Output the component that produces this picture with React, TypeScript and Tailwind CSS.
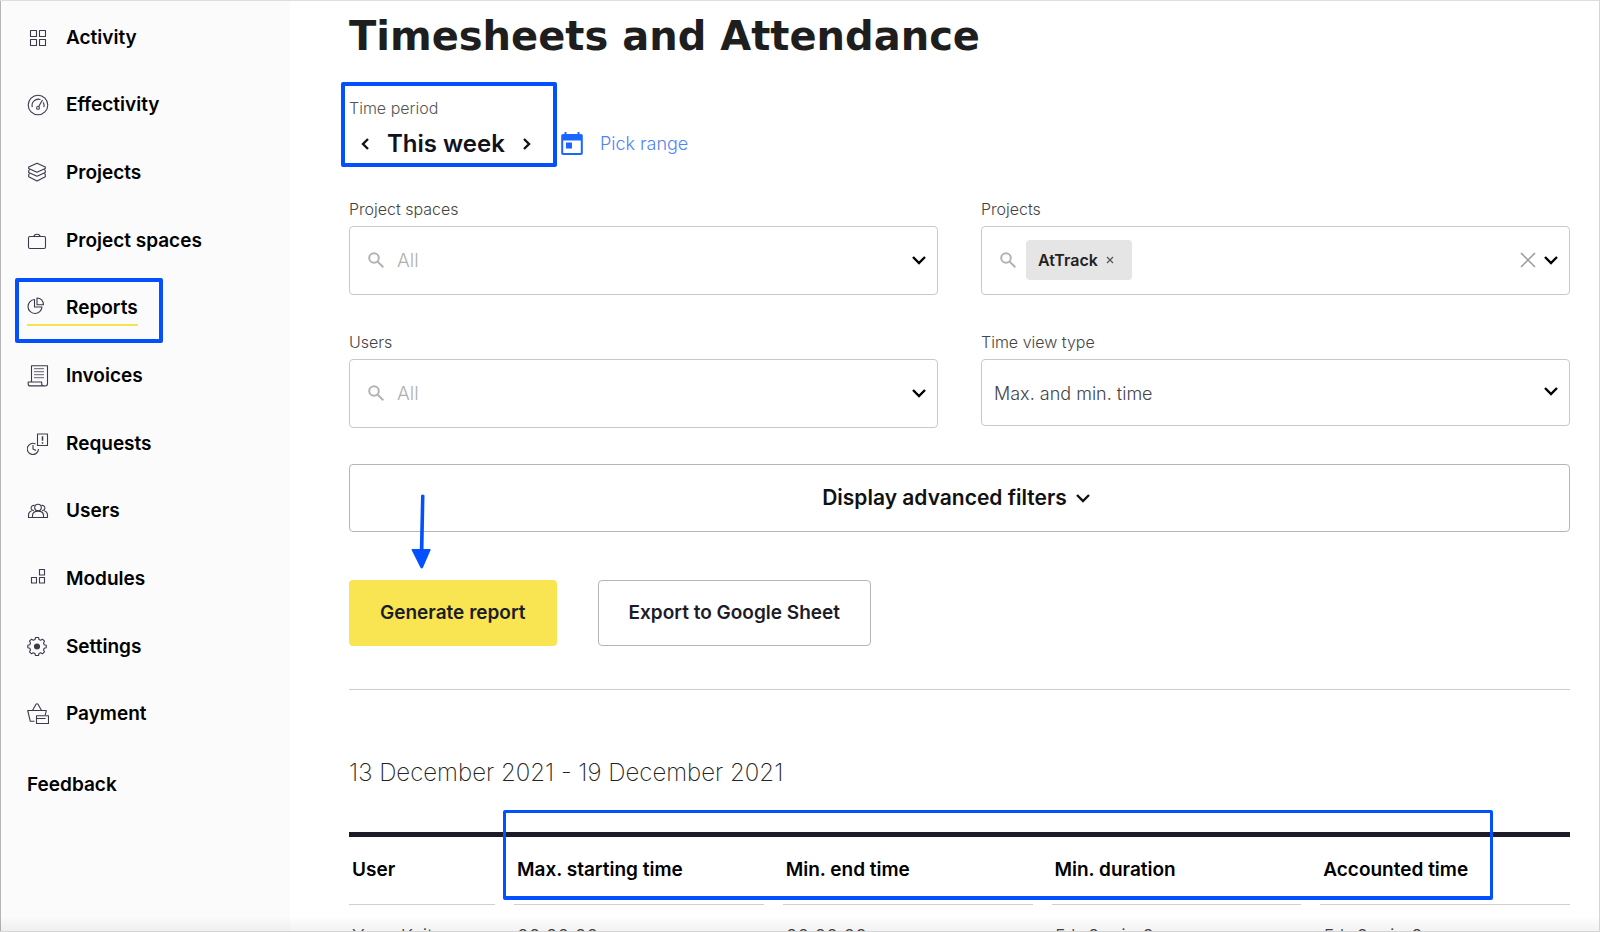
import React from 'react';

const icons: Record<string, React.ReactNode> = {
  Activity: (
    <>
      <rect x="3.5" y="3.5" width="6" height="6" />
      <rect x="12.5" y="3.5" width="6" height="6" />
      <rect x="3.5" y="12.5" width="6" height="6" />
      <rect x="12.5" y="12.5" width="6" height="6" />
    </>
  ),
  Effectivity: (
    <>
      <circle cx="11" cy="11" r="9.8" />
      <path d="M5.3 13.2a6.3 6.3 0 0 1 8.2-7.6M16.2 8.2a6.3 6.3 0 0 1 .6 5" />
      <path d="M11.6 12.6 15.5 6" />
      <circle cx="11" cy="13.9" r="1.4" />
    </>
  ),
  Projects: (
    <>
      <path d="M10 1.2 18.3 5v1.6L10 10.2 1.7 6.6V5z" />
      <path d="M2.6 7.2 1.7 8.8v1.8l8.3 3.6 8.3-3.6V8.8l-.9-1.6" />
      <path d="m2.6 11.2-.9 1.6v1.9L10 19l8.3-4.3v-1.9l-.9-1.6" />
    </>
  ),
  'Project spaces': (
    <>
      <rect x="1.5" y="6.5" width="17" height="12" rx="1.5" />
      <path d="M7 6.5c0-1.7.8-2.2 3-2.2s3 .5 3 2.2" />
    </>
  ),
  Reports: (
    <>
      <path d="M7.5 2.5a7 7 0 1 0 7.5 7.5H7.5z" />
      <path d="M10 1v6.8h6.5C16.5 3.8 13.7 1 10 1z" />
    </>
  ),
  Invoices: (
    <>
      <path d="M4.5 17V.7h16v18.1a2 2 0 0 1-2 2" />
      <path d="M18.5 20.9H3.2a2 2 0 0 1-2-2V17h13.5v1.8c0 1.3.8 2.1 2 2.1" />
      <path d="M7 3.7h10M7 6.7h10M7 9.7h10M7 12.7h10" strokeWidth="0.8" />
    </>
  ),
  Requests: (
    <>
      <path d="M8.5 10.9a5.6 5.6 0 1 0 3 5.2" />
      <path d="M6 12v4l3 1.6" />
      <path d="M10.5 1h10v11.5h-10z" />
      <path d="M15.5 3.3v4.5M15.5 9.3v1.5" strokeWidth="1.5" />
    </>
  ),
  Users: (
    <>
      <circle cx="11" cy="7.5" r="3.3" />
      <path d="M7.7 5.6a2.6 2.6 0 1 0-.9 5M14.3 5.6a2.6 2.6 0 1 1 .9 5" />
      <path d="M5.5 17.5v-2c0-2.7 2.3-4.4 5.5-4.4s5.5 1.7 5.5 4.4v2z" />
      <path d="M4.8 10.8c-2.2.6-3.3 2.2-3.3 4.7v2h4M17.2 10.8c2.2.6 3.3 2.2 3.3 4.7v2h-4" />
    </>
  ),
  Modules: (
    <>
      <rect x="12.5" y="1.5" width="5" height="5.5" />
      <rect x="4.5" y="9.5" width="5" height="5.5" />
      <rect x="12.5" y="9.5" width="5" height="5.5" />
    </>
  ),
  Settings: (
    <>
      <path d="M8.5 1.5h3l.5 2 1.7.7 1.8-1 2 2-1 1.8.7 1.7 2 .5v2.6l-2 .5-.7 1.7 1 1.8-2 2-1.8-1-1.7.7-.5 2h-3l-.5-2-1.7-.7-1.8 1-2-2 1-1.8-.7-1.7-2-.5V9.2l2-.5.7-1.7-1-1.8 2-2 1.8 1 1.7-.7z" />
      <circle cx="10" cy="10.5" r="2.5" fill="currentColor" />
    </>
  ),
  Payment: (
    <>
      <path d="M7.5 18.3H3.3L.7 7.5h18.6l-1 4.5" />
      <path d="M5.5 7.5 9 1.3c.5-.8 1.5-.8 2 0l3.5 6.2" />
      <path d="M9.5 12.7h12v7.8h-12zM9.5 15.5h9" />
    </>
  ),
};

const menu = [
  'Activity',
  'Effectivity',
  'Projects',
  'Project spaces',
  'Reports',
  'Invoices',
  'Requests',
  'Users',
  'Modules',
  'Settings',
  'Payment',
];

const columns = ['User', 'Max. starting time', 'Min. end time', 'Min. duration', 'Accounted time'];

const rows = [['Yana Kvit', '00:00:00', '00:00:00', '5 h 0 min 0 s', '5 h 0 min 0 s']];

const Chevron: React.FC<{ className?: string; d?: string }> = ({ className = '', d = 'm2 5 6 6 6-6' }) => (
  <svg className={`h-4 w-4 shrink-0 ${className}`} viewBox="0 0 16 16" fill="none" stroke="currentColor" strokeWidth="2.4">
    <path d={d} />
  </svg>
);

const SearchIcon: React.FC = () => (
  <svg className="h-4 w-4 shrink-0 text-[#b3b3b3]" viewBox="0 0 16 16" fill="none" stroke="currentColor" strokeWidth="2">
    <circle cx="6" cy="6" r="4.8" />
    <path d="m9.5 9.5 5.8 5.8" />
  </svg>
);

// Blue frame drawn over the part of the page it points out
const Highlight: React.FC<{ className: string }> = ({ className }) => (
  <div className={`pointer-events-none absolute rounded-xs border-[#0450ff] ${className}`} />
);

const Sidebar: React.FC = () => (
  <aside className="w-[290px] shrink-0 border-l border-[#b5b5b5] bg-[#fbfbfb] pl-[26px] pt-1 text-[19px] font-semibold leading-6">
    <nav className="flex h-[744px] flex-col">
      {menu.map((name) => (
        <div key={name} className="flex flex-1 items-center">
          <a href="#" className="relative flex items-center gap-[17px]">
            <svg
              className="h-[22px] w-[22px] shrink-0 text-[#3a3a4a]"
              viewBox="0 0 22 22"
              fill="none"
              stroke="currentColor"
              strokeWidth="1.1"
              strokeLinejoin="round"
            >
              {icons[name]}
            </svg>
            <span>{name}</span>
            {name === 'Reports' && (
              <>
                <span className="absolute inset-x-0 -bottom-[6px] h-[2px] bg-[#f8e34f]" />
                <Highlight className="-bottom-[23px] -left-3 -right-[25px] -top-[18px] border-4" />
              </>
            )}
          </a>
        </div>
      ))}
    </nav>
    <a href="#" className="mt-[25px] inline-block">
      Feedback
    </a>
  </aside>
);

const SearchSelect: React.FC<{ id: string; label: string; chip?: string }> = ({ id, label, chip }) => (
  <div>
    <label htmlFor={id} className="mb-[7px] block text-base font-light leading-5 text-[#444]">
      {label}
    </label>
    <div className="flex h-[69px] items-center rounded-sm border border-[#c9c9c9] pb-px pl-[18px] pr-[10px]">
      <SearchIcon />
      {chip && (
        <span className="ml-[10px] flex h-10 items-center gap-2 rounded-sm bg-[#e5e5e5] pl-3 pr-[18px] text-base font-semibold text-[#222]">
          {chip}
          <button type="button" aria-label={`Remove ${chip}`}>
            <svg className="h-2 w-2" viewBox="0 0 8 8" stroke="#555" strokeWidth="1.2">
              <path d="m1 1 6 6M7 1 1 7" />
            </svg>
          </button>
        </span>
      )}
      <input
        id={id}
        type="text"
        placeholder={chip ? '' : 'All'}
        className="ml-[13px] h-10 min-w-0 flex-1 text-[19px] font-light outline-none placeholder:text-[#b0b0b0]"
      />
      {chip && (
        <button type="button" aria-label="Clear" className="mr-[7px]">
          <svg className="h-4 w-4" viewBox="0 0 16 16" stroke="#999" strokeWidth="1.5">
            <path d="m1 1 14 14M15 1 1 15" />
          </svg>
        </button>
      )}
      <button type="button" aria-label={`Open ${label}`}>
        <Chevron />
      </button>
    </div>
  </div>
);

const Filters: React.FC = () => (
  <div className="mt-[41px] grid grid-cols-2 gap-x-[43px] gap-y-[37px]">
    <SearchSelect id="spaces" label="Project spaces" />
    <SearchSelect id="projects" label="Projects" chip="AtTrack" />
    <SearchSelect id="users" label="Users" />
    <div>
      <label htmlFor="view" className="mb-[7px] block text-base font-light leading-5 text-[#444]">
        Time view type
      </label>
      <div className="relative">
        <select
          id="view"
          className="h-[67px] w-full appearance-none rounded-sm border border-[#c9c9c9] px-3 pt-[3px] text-lg font-light text-[#444]"
        >
          <option>Max. and min. time</option>
        </select>
        <Chevron className="pointer-events-none absolute right-[11px] top-6" />
      </div>
    </div>
  </div>
);

const Period: React.FC = () => (
  <div className="mt-[31px] flex items-end gap-[10px]">
    <div className="relative">
      <div className="text-base font-light leading-5 text-[#555]">Time period</div>
      <div className="mt-3 flex items-center gap-[14px] pl-2 pr-[15px] text-[#12121c]">
        <button type="button" aria-label="Previous">
          <Chevron d="m11 3-5 5 5 5" />
        </button>
        <span className="text-2xl font-semibold leading-7">This week</span>
        <button type="button" aria-label="Next">
          <Chevron d="m5 3 5 5-5 5" />
        </button>
      </div>
      <Highlight className="-bottom-[9px] -left-2 -right-[7px] -top-4 border-4" />
    </div>
    <button type="button" className="flex items-center gap-4 text-lg font-light leading-7 text-[#4f83f7]">
      <svg className="h-6 w-6" viewBox="0 0 24 24" fill="#1a66ff">
        <path
          fillRule="evenodd"
          d="M4.5 0h2v2h11V0h2v2H21a1.8 1.8 0 0 1 1.8 1.8v17.4A1.8 1.8 0 0 1 21 23H3a1.8 1.8 0 0 1-1.8-1.8V3.8A1.8 1.8 0 0 1 3 2h1.5zM3.2 8.5V21h17.6V8.5z"
        />
        <rect x="6" y="10.5" width="6" height="6" />
      </svg>
      Pick range
    </button>
  </div>
);

const Report: React.FC = () => (
  <section>
    <h2 className="mt-[67px] text-2xl font-extralight leading-8 text-[#222]">13 December 2021 - 19 December 2021</h2>
    <div className="relative mt-[43px] border-t-[5px] border-[#1c1c28]">
      <table className="w-[calc(100%+19px)] table-fixed text-left">
        <thead>
          <tr>
            {columns.map((name) => (
              <th key={name} className="p-0 pr-[19px] first:w-[165px]">
                <div className="flex h-[68px] items-center whitespace-nowrap border-b border-[#cfcfcf] pl-[3px] text-[19px] font-semibold">
                  {name}
                </div>
              </th>
            ))}
          </tr>
        </thead>
        <tbody>
          {rows.map((row) => (
            <tr key={row[0]}>
              {row.map((cell, i) => (
                <td key={i} className="pl-[3px] pt-[18px] text-[19px] font-light leading-7 text-[#444]">
                  {cell}
                </td>
              ))}
            </tr>
          ))}
        </tbody>
      </table>
      <Highlight className="-top-[27px] left-[154px] right-[77px] h-[90px] border-[3px] border-b-4" />
    </div>
  </section>
);

export default function App() {
  return (
    <div className="relative flex h-screen overflow-hidden border-r border-[#d5d5d5] bg-white font-['Inter',sans-serif] text-black">
      <Sidebar />
      <main className="min-w-0 flex-1 pl-[59px] pr-[29px] pt-[6px]">
        <h1 className="mb-8 font-['DejaVu_Sans',sans-serif] text-[40px] font-bold leading-[60px] text-[#1e1e1e]">
          Timesheets and Attendance
        </h1>
        <Period />
        <Filters />
        <div className="relative mt-9">
          <button
            type="button"
            className="flex h-[68px] w-full items-center justify-center gap-2 rounded-sm border border-[#b5b5b5] pr-[6px] text-[21px] font-semibold text-[#111]"
          >
            Display advanced filters
            <Chevron />
          </button>
          <svg className="pointer-events-none absolute left-[62px] top-[30px] h-[76px] w-5" viewBox="0 0 20 76" fill="#0450ff">
            <path d="M10 1.5Q11.7-.5 13.5 1.5L12.5 55H19q1 0 .6 1L12 73.5q-1.4 2-2.6 0L.6 56q-.3-1 .6-1h7.6z" />
          </svg>
        </div>
        <div className="mt-12 flex gap-[41px] text-[19px] font-semibold text-[#1c1c28]">
          <button type="button" className="h-[66px] rounded-sm bg-[#f9e551] px-[31px]">
            Generate report
          </button>
          <button type="button" className="h-[66px] rounded-sm border border-[#b5b5b5] px-[30px]">
            Export to Google Sheet
          </button>
        </div>
        <hr className="mt-[43px] border-[#cccccc]" />
        <Report />
      </main>
      <div className="pointer-events-none absolute inset-x-0 top-0 h-px bg-[#dedede]" />
      <div className="pointer-events-none absolute inset-x-0 bottom-0 h-4 border-b border-[#d5d5d5] bg-linear-to-b from-transparent to-black/5" />
    </div>
  );
}
